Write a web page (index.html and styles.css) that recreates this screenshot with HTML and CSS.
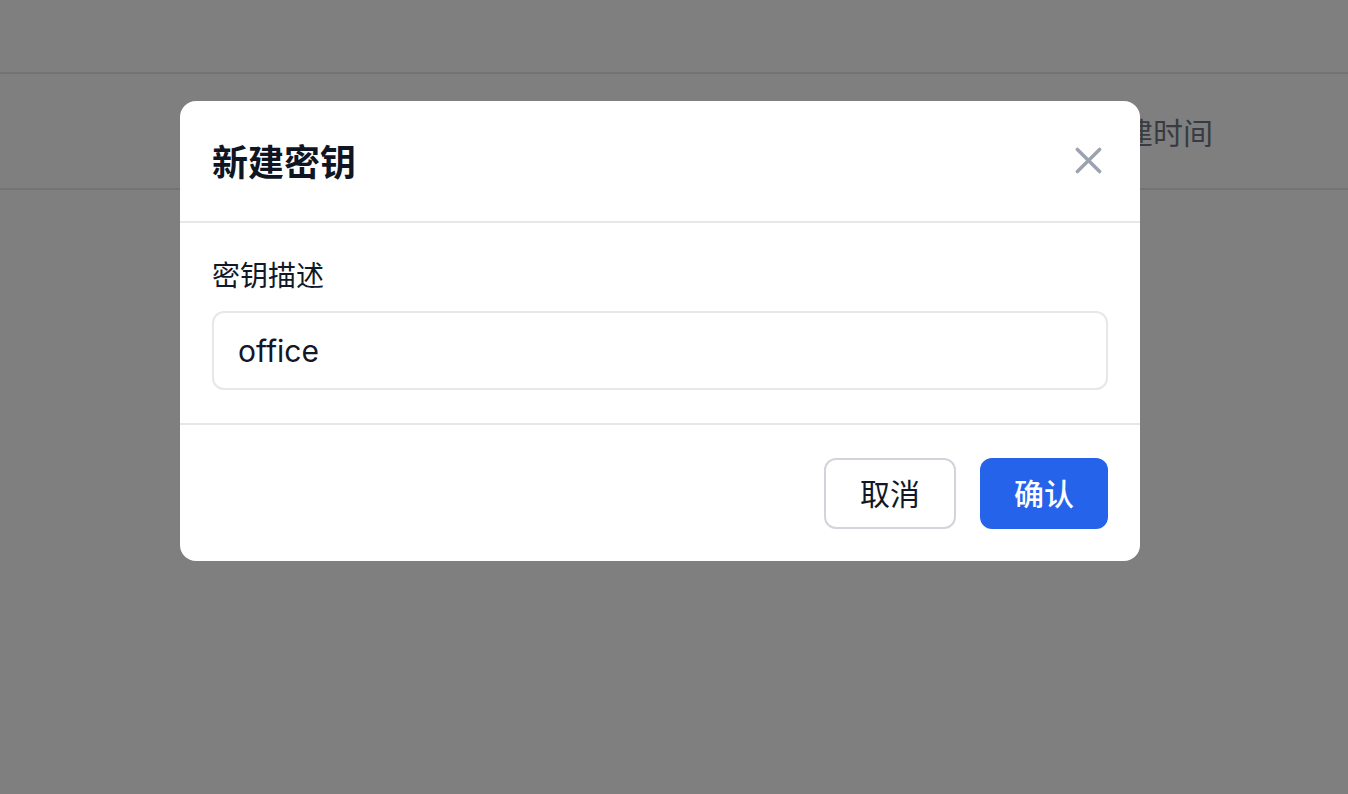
FILE: index.html
```html
<!DOCTYPE html>
<html lang="zh">
<head>
<meta charset="utf-8">
<link rel="stylesheet" href="styles.css">
</head>
<body>
<div class="page">
  <div class="topbar"></div>
  <div class="thead">
    <div class="th">创建时间</div>
  </div>
</div>
<div class="overlay">
  <div class="modal">
    <div class="modal-header">
      <h2 class="modal-title">新建密钥</h2>
      <button class="close" aria-label="close">
        <svg width="28" height="28" viewBox="0 0 28 28"><path d="M2.5 2.5 L25.5 25.5 M25.5 2.5 L2.5 25.5" stroke="#9ca3af" stroke-width="3.6" stroke-linecap="round" fill="none"/></svg>
      </button>
    </div>
    <div class="modal-body">
      <label class="label">密钥描述</label>
      <div class="input">office</div>
    </div>
    <div class="modal-footer">
      <button class="btn btn-cancel">取消</button>
      <button class="btn btn-ok">确认</button>
    </div>
  </div>
</div>
</body>
</html>
```
FILE: styles.css
```css
* { box-sizing: border-box; }
html, body { margin: 0; padding: 0; }
body {
  width: 1348px;
  height: 794px;
  overflow: hidden;
  background: #fff;
  font-family: Inter, "Noto Sans CJK SC", sans-serif;
  position: relative;
}
.page { display: flex; flex-direction: column; }
.topbar { height: 74px; border-bottom: 2px solid #e5e7eb; }
.thead {
  height: 116px;
  border-bottom: 2px solid #e5e7eb;
  display: flex;
  align-items: center;
  padding-left: 1093px;
}
.th {
  font-size: 30px;
  color: #707683;
  font-family: "Noto Sans CJK SC", sans-serif;
}
.overlay {
  position: absolute;
  inset: 0;
  background: rgba(0,0,0,0.5);
  padding: 101px 0 0 180px;
}
.modal {
  width: 960px;
  background: #fff;
  border-radius: 16px;
  display: flex;
  flex-direction: column;
}
.modal-header {
  height: 122px;
  border-bottom: 2px solid #e5e7eb;
  display: flex;
  align-items: center;
  justify-content: space-between;
  padding: 0 32px 2px;
}
.modal-title {
  margin: 0;
  font-family: "Noto Sans CJK SC", sans-serif;
  font-weight: 700;
  font-size: 36px;
  color: #0f1523;
}
.close {
  border: 0;
  background: none;
  padding: 0;
  width: 40px;
  height: 40px;
  display: flex;
  align-items: center;
  justify-content: center;
}
.close svg { width: 27px; height: 27px; }
.modal-body {
  padding: 31px 32px 33px;
  border-bottom: 2px solid #e5e7eb;
  display: flex;
  flex-direction: column;
}
.label {
  font-family: "Noto Sans CJK SC", sans-serif;
  font-size: 28px;
  line-height: 40px;
  color: #111827;
  margin-bottom: 17px;
}
.input {
  height: 79px;
  border: 2px solid #e5e7eb;
  border-radius: 12px;
  padding: 0 24px;
  display: flex;
  align-items: center;
  font-size: 30px;
  color: #111827;
}
.modal-footer {
  height: 136px;
  display: flex;
  justify-content: flex-end;
  align-items: center;
  gap: 24px;
  padding: 0 32px;
}
.btn {
  height: 71px;
  border-radius: 12px;
  font-family: "Noto Sans CJK SC", sans-serif;
  font-size: 30px;
  padding: 0 0 3px;
  display: flex;
  align-items: center;
  justify-content: center;
}
.btn-cancel {
  width: 132px;
  background: #fff;
  border: 2px solid #d1d5db;
  color: #111827;
}
.btn-ok {
  width: 128px;
  background: #2563eb;
  border: 0;
  color: #fff;
  font-weight: 500;
}
```
